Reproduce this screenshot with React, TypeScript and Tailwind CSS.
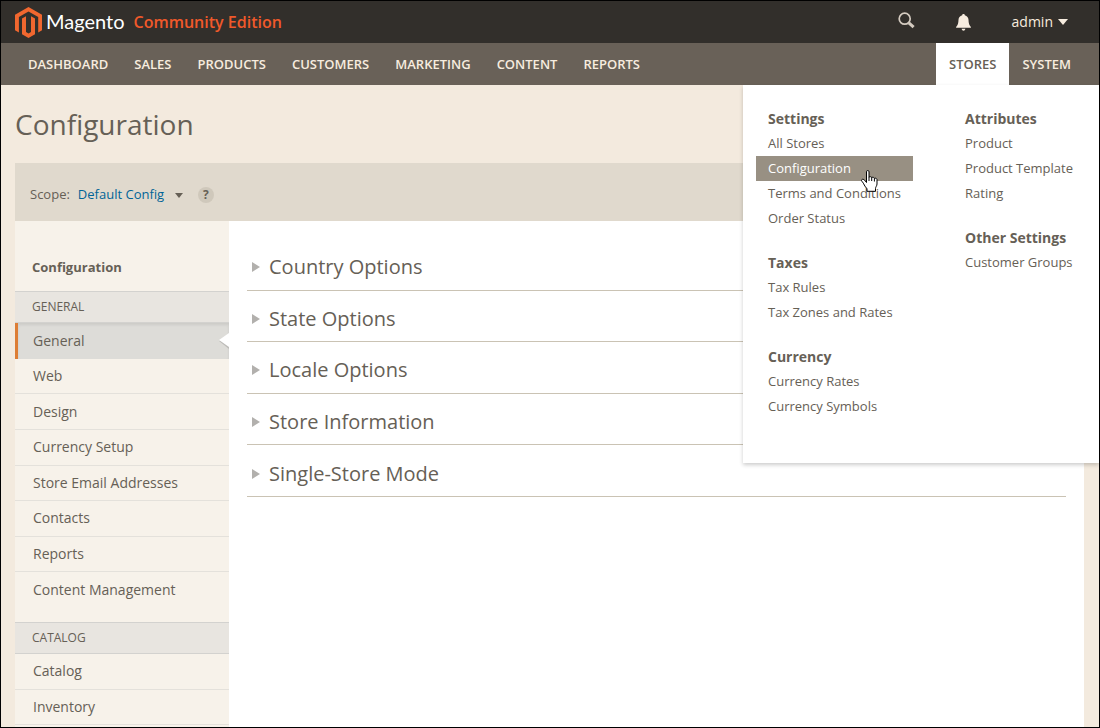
import React from 'react';

const leftNav = ['DASHBOARD', 'SALES', 'PRODUCTS', 'CUSTOMERS', 'MARKETING', 'CONTENT', 'REPORTS'];

type Group = { title: string; items: string[] };

const menuColumns: Group[][] = [
  [
    { title: 'Settings', items: ['All Stores', 'Configuration', 'Terms and Conditions', 'Order Status'] },
    { title: 'Taxes', items: ['Tax Rules', 'Tax Zones and Rates'] },
    { title: 'Currency', items: ['Currency Rates', 'Currency Symbols'] },
  ],
  [
    { title: 'Attributes', items: ['Product', 'Product Template', 'Rating'] },
    { title: 'Other Settings', items: ['Customer Groups'] },
  ],
];

const sections = ['Country Options', 'State Options', 'Locale Options', 'Store Information', 'Single-Store Mode'];

const generalItems = [
  'General',
  'Web',
  'Design',
  'Currency Setup',
  'Store Email Addresses',
  'Contacts',
  'Reports',
  'Content Management',
];

function Logo() {
  return (
    <svg width="27" height="31" viewBox="0 0 27 31" fill="#f1672f" aria-hidden="true">
      <path d="M13.500 0 27 7.700V23.200L23.200 25.400V9.900L13.500 4.400 3.900 9.900V25.400L0 23.200V7.700Z" />
      <path d="M7 11.500 11 9.300V25L13.500 26.400 16 25V9.300L20 11.500V27.200L13.500 31 7 27.200Z" />
    </svg>
  );
}

function SearchIcon() {
  return (
    <svg width="17" height="17" viewBox="0 0 17 17" fill="none" stroke="#d4cbc0" aria-hidden="true">
      <circle cx="6.700" cy="6.700" r="5.500" strokeWidth="1.700" />
      <path d="M10.800 10.800 15.600 15.200" strokeWidth="3" />
    </svg>
  );
}

function BellIcon() {
  return (
    <svg width="15" height="17" viewBox="0 0 15 17" fill="#f7ecdf" aria-hidden="true">
      <path d="M7.500 0c.8 0 1.300.5 1.300 1.200 2.300.6 3.600 2.300 3.700 4.600.1 3.300.6 5.500 2.400 7.200v.8H.1V13c1.800-1.700 2.300-3.900 2.400-7.200.1-2.300 1.400-4 3.700-4.600C6.200.5 6.700 0 7.500 0Z" />
      <path d="M5.600 14.800h3.800c-.3 1.200-1 1.900-1.900 1.900s-1.600-.7-1.900-1.900Z" />
    </svg>
  );
}

function HandCursor() {
  return (
    <svg
      className="pointer-events-none absolute top-[14px] left-[105px] z-10"
      width="17"
      height="22"
      viewBox="0 0 17 22"
      fill="#fff"
      stroke="#000"
      strokeLinejoin="round"
      aria-hidden="true"
    >
      <path d="M5.500 12V1.800C5.500.9 6 .5 6.700.5s1.300.4 1.300 1.300v5.400c0-.7 2.700-.8 2.700.5 0-.7 2.700-.6 2.700.8 0-.7 2.600-.5 2.600 1.200v4.300c0 1.800-1.500 3-1.500 4.500v2.800H6v-2.500c-1.500-1.600-2.700-3.600-3.700-5.600C1.300 11.400 0 10.900.7 9.800c.7-1 2.200-.5 3 .5L5.500 12.500Z" />
      <path d="M8 7v4M10.700 7.500V11M13.400 8.500V11.500" fill="none" />
    </svg>
  );
}

function MenuGroup({ title, items }: Group) {
  return (
    <section>
      <h2 className="px-3 text-sm leading-[25px] font-bold">{title}</h2>
      <ul>
        {items.map((item) => (
          <li key={item} className="relative">
            <a
              href="#"
              className={
                item === 'Configuration'
                  ? 'block bg-[#989083] px-3 text-[13px] leading-[25px] whitespace-nowrap text-white'
                  : 'block px-3 text-[13px] leading-[25px] whitespace-nowrap'
              }
            >
              {item}
            </a>
            {item === 'Configuration' && <HandCursor />}
          </li>
        ))}
      </ul>
    </section>
  );
}

function StoresMenu() {
  return (
    <div className="absolute top-full right-0 z-10 flex gap-10 bg-white pt-[21px] pr-[14px] pb-11 pl-[13px] text-[#666056] shadow-[0_2px_4px_rgba(0,0,0,0.2)]">
      {menuColumns.map((groups, i) => (
        <div key={i} className={i === 0 ? 'flex w-[157px] flex-col gap-[19px]' : 'flex w-[132px] flex-col gap-[19px]'}>
          {groups.map((group) => (
            <MenuGroup key={group.title} {...group} />
          ))}
        </div>
      ))}
    </div>
  );
}

function SideHeading({ children }: { children: string }) {
  return (
    <h3 className="flex h-8 items-center border-y border-[#d3d2cf] bg-[#e8e5e0] px-[17px] text-xs font-medium">
      {children}
    </h3>
  );
}

function SideItem({ label, active }: { label: string; active?: boolean }) {
  if (active) {
    return (
      <li className="relative flex flex-1 items-center border-l-[3px] border-[#dd7d34] bg-[#dddcd8] pt-px shadow-[inset_0_2px_3px_rgba(0,0,0,0.08)]">
        <a href="#" aria-current="page" className="px-[15px]">
          {label}
        </a>
        <svg className="absolute top-2.5 right-0" width="10" height="16" viewBox="0 0 10 16" aria-hidden="true">
          <path d="M0 8 10 1V16Z" fill="#bdbcb9" />
          <path d="M0 7 10 0V14Z" fill="#fff" />
        </svg>
      </li>
    );
  }
  return (
    <li className="flex flex-1 items-center border-b border-[#e4e1db] px-[18px] last:border-b-0">
      <a href="#">{label}</a>
    </li>
  );
}

export default function App() {
  return (
    <div className="flex min-h-screen flex-col border border-black bg-[#f3eade] font-['Open_Sans',sans-serif] text-[#666056]">
      <header className="flex h-[42px] items-center bg-[#322f2b] pr-[31px] pl-[14px]">
        <a href="#" className="flex items-center">
          <Logo />
          <span className="ml-1 pb-0.5 font-['Lato',sans-serif] text-xl text-white">Magento</span>
        </a>
        <span className="ml-[9px] text-base font-semibold text-[#f0592a]">Community Edition</span>
        <button type="button" aria-label="Search" className="mr-[41px] mb-1 ml-auto">
          <SearchIcon />
        </button>
        <button type="button" aria-label="Notifications" className="mr-[41px]">
          <BellIcon />
        </button>
        <button type="button" className="flex items-center gap-[5px] text-sm text-[#f7ecdf]">
          admin
          <svg width="10" height="6" viewBox="0 0 10 6" fill="#f7ecdf" aria-hidden="true">
            <path d="M0 0H10L5 6Z" />
          </svg>
        </button>
      </header>

      <nav className="relative flex h-[42px] items-stretch bg-[#696158] pr-[15px] pl-[14px] text-[13px] font-semibold text-[#f7ecdf]">
        {leftNav.map((item) => (
          <a key={item} href="#" className="flex items-center px-[13px] pt-0.5">
            {item}
          </a>
        ))}
        <a href="#" className="ml-auto flex items-center bg-white px-[13px] pt-0.5 text-[#666056]">
          STORES
        </a>
        <a href="#" className="flex items-center px-[13px] pt-0.5">
          SYSTEM
        </a>
        <div className="contents font-normal">
          <StoresMenu />
        </div>
      </nav>

      <div className="flex flex-1 flex-col pr-[15px] pl-[14px]">
        <h1 className="flex h-[78px] items-center text-[28px]">Configuration</h1>

        <div className="flex h-[58px] items-center bg-[#e0d9cd] px-[15px] pt-1.5 text-[13px]">
          <label htmlFor="scope">Scope:</label>
          <div className="ml-2 flex items-center">
            <select id="scope" className="-mr-4 w-[113px] appearance-none bg-transparent text-[#006497]">
              <option>Default Config</option>
            </select>
            <svg className="pointer-events-none" width="8" height="5" viewBox="0 0 8 5" fill="#666056" aria-hidden="true">
              <path d="M0 0H8L4 5Z" />
            </svg>
          </div>
          <button
            type="button"
            aria-label="Scope help"
            className="ml-[15px] flex size-4 items-center justify-center rounded-full bg-[#cfc8bb] text-xs font-bold"
          >
            ?
          </button>
        </div>

        <div className="flex flex-1 bg-white">
          <aside className="w-[214px] shrink-0 bg-[#f7f2ea]">
            <h2 className="flex h-[70px] items-center px-[17px] pt-6 text-[13px] font-bold">Configuration</h2>
            <SideHeading>GENERAL</SideHeading>
            <ul className="mb-[15px] flex h-[284px] flex-col text-sm">
              {generalItems.map((item) => (
                <SideItem key={item} label={item} active={item === 'General'} />
              ))}
            </ul>
            <SideHeading>CATALOG</SideHeading>
            <ul className="flex h-[71px] flex-col border-b border-[#e4e1db] text-sm">
              <SideItem label="Catalog" />
              <SideItem label="Inventory" />
            </ul>
          </aside>

          <main className="flex-1 px-[18px] pt-[18px]">
            <div className="flex h-[258px] flex-col">
              {sections.map((section) => (
                <h2 key={section} className="flex flex-1 border-b border-[#cac3b4] text-xl">
                  <button type="button" className="flex flex-1 items-center gap-[9px] pt-1.5 pl-[5px] text-left">
                    <svg width="8" height="10" viewBox="0 0 8 10" fill="#b2b0ad" aria-hidden="true">
                      <path d="M0 0 8 5 0 10Z" />
                    </svg>
                    {section}
                  </button>
                </h2>
              ))}
            </div>
          </main>
        </div>
      </div>
    </div>
  );
}
